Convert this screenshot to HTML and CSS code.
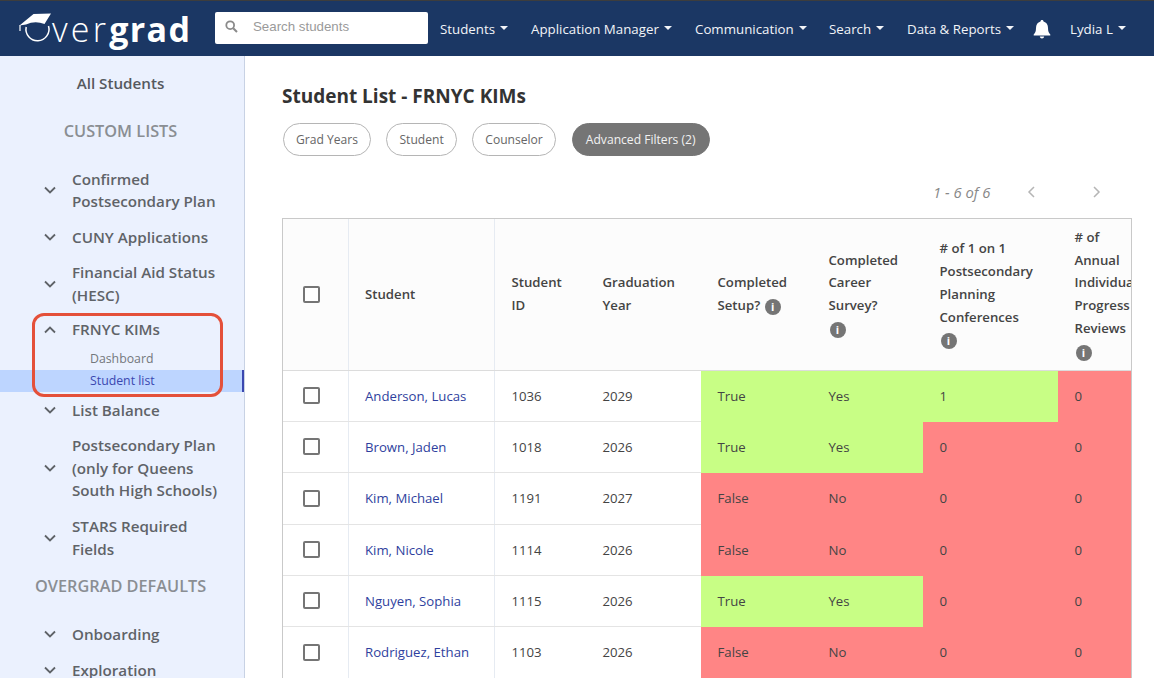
FILE: index.html
```html
<!DOCTYPE html>
<html lang="en">
<head>
<meta charset="utf-8">
<title>Overgrad - Student List</title>
<link rel="stylesheet" href="styles.css">
</head>
<body>
<header class="topbar">
  <div class="logo">
    <svg class="logo-mark" width="34" height="34" viewBox="0 0 34 34">
      <path d="M8.200 16 A11.500 11.500 0 1 0 30.500 15" fill="none" stroke="#fff" stroke-width="1.500"/>
      <path d="M1.500 14.500 L15.500 3 L33 2.500 L26.500 13 Q17 9.500 8 13.500 Z" fill="#fff"/>
      <path d="M2 14 V20" stroke="#fff" stroke-width="1.200"/>
    </svg>
    <span class="logo-text"><span class="logo-light">ver</span><span class="logo-bold">grad</span></span>
  </div>
  <div class="search">
    <svg width="13" height="13" viewBox="0 0 13 13"><circle cx="5.200" cy="5.200" r="3.900" fill="none" stroke="#8a8a8a" stroke-width="1.800"/><path d="M8.200 8.200 L12 12" stroke="#8a8a8a" stroke-width="2"/></svg>
    <span class="search-text">Search students</span>
  </div>
  <nav class="nav">
    <span class="nav-item nav-a">Students</span>
    <span class="nav-item nav-b">Application Manager</span>
    <span class="nav-item nav-c">Communication</span>
    <span class="nav-item nav-d">Search</span>
    <span class="nav-item nav-e">Data &amp; Reports</span>
    <svg class="bell" width="18" height="20" viewBox="0 0 18 20"><path d="M9 1 C10 1 10.500 1.600 10.500 2.500 C13.500 3.300 15 5.800 15 9 C15 12.500 15.800 14 17.300 15.500 V16.500 H0.700 V15.500 C2.200 14 3 12.500 3 9 C3 5.800 4.500 3.300 7.500 2.500 C7.500 1.600 8 1 9 1 Z M6.800 17.500 H11.200 C11 18.800 10.100 19.500 9 19.500 C7.900 19.500 7 18.800 6.800 17.500 Z" fill="#fff"/></svg>
    <span class="nav-item nav-f">Lydia L</span>
  </nav>
</header>
<div class="body">
  <aside class="sidebar">
    <div class="all">All Students</div>
    <div class="section custom">CUSTOM LISTS</div>
    <div class="side-item h2"><svg class="chev" viewBox="0 0 12 8"><path d="M1 1.500 L6 6.500 L11 1.500"/></svg><span>Confirmed Postsecondary Plan</span></div>
    <div class="side-item h1"><svg class="chev" viewBox="0 0 12 8"><path d="M1 1.500 L6 6.500 L11 1.500"/></svg><span>CUNY Applications</span></div>
    <div class="side-item h2"><svg class="chev" viewBox="0 0 12 8"><path d="M1 1.500 L6 6.500 L11 1.500"/></svg><span>Financial Aid Status (HESC)</span></div>
    <div class="side-item h1 open"><svg class="chev" viewBox="0 0 12 8"><path d="M1 6.500 L6 1.500 L11 6.500"/></svg><span>FRNYC KIMs</span></div>
    <div class="sub">Dashboard</div>
    <div class="sub active">Student list</div>
    <div class="side-item h1"><svg class="chev" viewBox="0 0 12 8"><path d="M1 1.500 L6 6.500 L11 1.500"/></svg><span>List Balance</span></div>
    <div class="side-item h3"><svg class="chev" viewBox="0 0 12 8"><path d="M1 1.500 L6 6.500 L11 1.500"/></svg><span>Postsecondary Plan (only for Queens South High Schools)</span></div>
    <div class="side-item h2"><svg class="chev" viewBox="0 0 12 8"><path d="M1 1.500 L6 6.500 L11 1.500"/></svg><span>STARS Required Fields</span></div>
    <div class="section defaults">OVERGRAD DEFAULTS</div>
    <div class="side-item h1"><svg class="chev" viewBox="0 0 12 8"><path d="M1 1.500 L6 6.500 L11 1.500"/></svg><span>Onboarding</span></div>
    <div class="side-item h1"><svg class="chev" viewBox="0 0 12 8"><path d="M1 1.500 L6 6.500 L11 1.500"/></svg><span>Exploration</span></div>
    <div class="highlight"></div>
  </aside>
  <main class="main">
    <h1 class="title">Student List - FRNYC KIMs</h1>
    <div class="filters">
      <span class="pill">Grad Years</span>
      <span class="pill">Student</span>
      <span class="pill">Counselor</span>
      <span class="pill pill-on">Advanced Filters (2)</span>
    </div>
    <div class="pager">
      <span class="pager-text">1 - 6 of 6</span>
      <svg class="pg" viewBox="0 0 8 12"><path d="M7 1 L2 6 L7 11"/></svg>
      <svg class="pg" viewBox="0 0 8 12"><path d="M1 1 L6 6 L1 11"/></svg>
    </div>
    <div class="table-wrap">
      <table class="grid">
        <colgroup><col class="c1"><col class="c2"><col class="c3"><col class="c4"><col class="c5"><col class="c6"><col class="c7"><col class="c8"></colgroup>
        <thead>
          <tr>
            <th class="cb edge"><span class="box"></span></th>
            <th class="edge">Student</th>
            <th>Student<br>ID</th>
            <th>Graduation<br>Year</th>
            <th>Completed<br>Setup? <i class="info">i</i></th>
            <th>Completed<br>Career<br>Survey?<br><i class="info">i</i></th>
            <th># of 1 on 1<br>Postsecondary<br>Planning<br>Conferences<br><i class="info">i</i></th>
            <th># of<br>Annual<br>Individual<br>Progress<br>Reviews<br><i class="info">i</i></th>
          </tr>
        </thead>
        <tbody>
          <tr class="r1"><td class="cb edge"><span class="box"></span></td><td class="edge"><a>Anderson, Lucas</a></td><td>1036</td><td>2029</td><td class="ok">True</td><td class="ok">Yes</td><td class="ok">1</td><td class="bad">0</td></tr>
          <tr class="r1"><td class="cb edge"><span class="box"></span></td><td class="edge"><a>Brown, Jaden</a></td><td>1018</td><td>2026</td><td class="ok">True</td><td class="ok">Yes</td><td class="bad">0</td><td class="bad">0</td></tr>
          <tr class="r2"><td class="cb edge"><span class="box"></span></td><td class="edge"><a>Kim, Michael</a></td><td>1191</td><td>2027</td><td class="bad">False</td><td class="bad">No</td><td class="bad">0</td><td class="bad">0</td></tr>
          <tr class="r1"><td class="cb edge"><span class="box"></span></td><td class="edge"><a>Kim, Nicole</a></td><td>1114</td><td>2026</td><td class="bad">False</td><td class="bad">No</td><td class="bad">0</td><td class="bad">0</td></tr>
          <tr class="r1"><td class="cb edge"><span class="box"></span></td><td class="edge"><a>Nguyen, Sophia</a></td><td>1115</td><td>2026</td><td class="ok">True</td><td class="ok">Yes</td><td class="bad">0</td><td class="bad">0</td></tr>
          <tr class="r2"><td class="cb edge"><span class="box"></span></td><td class="edge"><a>Rodriguez, Ethan</a></td><td>1103</td><td>2026</td><td class="bad">False</td><td class="bad">No</td><td class="bad">0</td><td class="bad">0</td></tr>
        </tbody>
      </table>
    </div>
  </main>
</div>
</body>
</html>
```
FILE: styles.css
```css
* { box-sizing: border-box; }
html, body { margin: 0; height: 100%; overflow: hidden; background: #fff; }
body { font-family: "Open Sans", sans-serif; width: 1154px; height: 678px; }

.topbar { height: 56px; background: #1b3764; border-top: 1px solid #3d3d3d; display: flex; align-items: center; color: #fff; }
.logo { width: 215px; display: flex; align-items: flex-start; padding: 6px 0 0 18px; height: 55px; flex: none; }
.logo-mark { flex: none; margin-top: 4px; }
.logo-text { font-size: 34px; line-height: 44px; white-space: nowrap; }
.logo-light { font-weight: 300; letter-spacing: 3.200px; }
.logo-bold { font-weight: 700; letter-spacing: 1.400px; }
.search { width: 213px; height: 32px; background: #fff; border-radius: 2px; display: flex; align-items: center; padding: 0 0 2px 10px; flex: none; margin-top: -2px; }
.search-text { font-family: "Liberation Sans", sans-serif; font-size: 13.300px; color: #9a9a9a; margin-left: 15px; }
.nav { display: flex; align-items: center; margin-left: 12px; font-size: 13.300px; white-space: nowrap; }
.nav-item { display: inline-flex; align-items: center; color: #f2f4f8; }
.nav-item::after { content: ""; border-left: 4px solid transparent; border-right: 4px solid transparent; border-top: 4px solid #f2f4f8; margin-left: 5px; margin-top: -2px; }
.nav-a { width: 91px; }
.nav-b { width: 164px; }
.nav-c { width: 134px; }
.nav-d { width: 78px; }
.nav-e { width: 126px; }
.bell { margin-right: 19px; flex: none; }

.body { display: flex; height: 622px; overflow: hidden; }
.sidebar { width: 245px; flex: none; background: #ebf1fe; border-right: 1px solid #c8d2e4; position: relative; color: #5f6368; font-weight: 600; font-size: 15.200px; }
.all { height: 54px; display: flex; align-items: center; justify-content: center; color: #55595e; padding-right: 3px; }
.section { text-align: center; font-size: 16.300px; color: #8a8e93; line-height: 22px; padding-right: 3px; }
.custom { height: 40px; padding-top: 10px; }
.defaults { height: 22px; margin: 8.500px 0 19.500px; text-align: left; padding-left: 35px; }
.side-item { display: flex; align-items: center; padding-left: 44px; line-height: 22.400px; color: #5f6368; }
.side-item span { width: 160px; margin-left: 16px; }
.chev { width: 12px; height: 8px; fill: none; stroke: #5f6368; stroke-width: 1.800px; flex: none; }
.h1 { height: 35.500px; }
.h2 { height: 58px; }
.h3 { height: 81px; }
.open { height: 36px; margin-top: -1px; }
.custom + .side-item { margin-top: 11px; }
.sub { height: 22px; line-height: 22px; padding-left: 90px; font-size: 12.300px; font-weight: 400; color: #73777c; }
.active { height: 22.500px; background: #bdd5ff; color: #3a47b0; border-right: 2px solid #3a47b0; }
.highlight { position: absolute; left: 32px; top: 257px; width: 191px; height: 84px; border: 3px solid #e4503a; border-radius: 12px; }

.main { flex: 1; min-width: 0; padding: 26px 0 0 37px; color: #333; overflow: hidden; }
.title { margin: 0; font-size: 19px; line-height: 28px; font-weight: 700; color: #333; }
.filters { display: flex; gap: 15.500px; margin-top: 13px; padding-left: 1px; }
.pill { height: 33px; border: 1px solid #b5b5b5; border-radius: 17px; padding: 0 12px; font-size: 12.100px; line-height: 31px; color: #666; background: #fff; }
.pill-on { background: #757575; border-color: #757575; color: #f2f2f2; padding: 0 13px; margin-left: 0.500px; }
.pager { height: 62px; display: flex; align-items: center; padding-left: 651px; font-size: 14.800px; font-style: italic; color: #888; padding-top: 10px; }
.pager-text { width: 94px; flex: none; }
.pg { width: 8px; height: 12px; fill: none; stroke: #b5b5b5; stroke-width: 1.500px; margin-right: 58px; flex: none; }
.table-wrap { width: 850px; border: 1px solid #c9c9c9; border-bottom: 0; overflow: hidden; }
.grid { border-collapse: collapse; table-layout: fixed; width: 850px; font-size: 13.200px; color: #444; }
.c1 { width: 65px; } .c2 { width: 146.500px; } .c3 { width: 91.500px; } .c4 { width: 115px; }
.c5 { width: 111px; } .c6 { width: 111px; } .c7 { width: 135px; } .c8 { width: 120px; }
th { height: 151px; background: #fcfcfc; text-align: left; font-weight: 600; line-height: 22.800px; padding: 0 0 0 16.500px; color: #444; border-bottom: 1px solid #dcdcdc; white-space: nowrap; overflow: hidden; }
td { padding: 0 0 0 16.500px; border-bottom: 1px solid #e4e4e4; white-space: nowrap; }
.r1 td { height: 51px; } .r2 td { height: 52px; }
.edge { border-right: 1px solid #e6ebf2; }
th.cb, td.cb { padding: 0 0 0 20px; }
.box { display: block; width: 17px; height: 17px; border: 2px solid #757575; border-radius: 2px; background: #fff; }
a { color: #2f3f9e; }
.ok { background: #c8fe85; border-bottom-color: #c8fe85; }
.bad { background: #ff8585; border-bottom-color: #ff8585; }
.info { display: inline-block; width: 16px; height: 16px; border-radius: 50%; background: #757575; color: #fff; font-size: 11px; line-height: 16px; font-weight: 700; font-style: normal; text-align: center; vertical-align: -1px; margin-left: 1px; }
```
